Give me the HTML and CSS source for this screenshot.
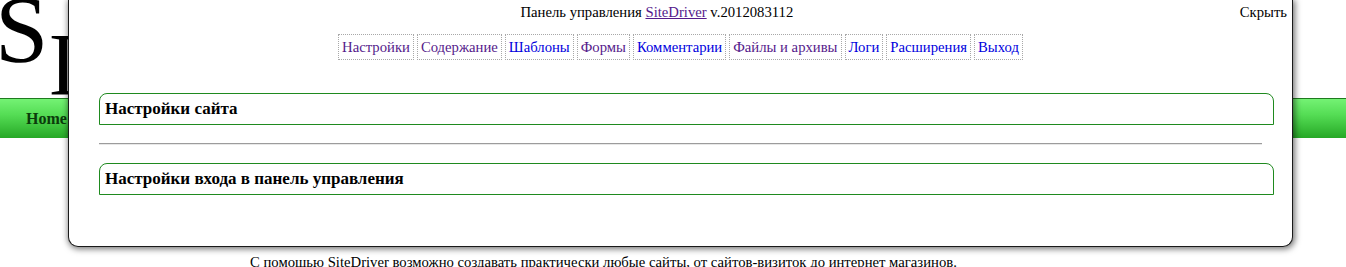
FILE: index.html
```html
<!DOCTYPE html>
<html lang="ru">

<head>
    <meta charset="UTF-8">
    <meta name="viewport" content="width=device-width, initial-scale=1.0">
    <title>SiteDriver</title>
    <link rel="stylesheet" href="styles.css">
</head>

<body>
    <div class="site-header">
        <div class="logo">
            <span class="logo-first">S</span>
            <span class="logo-rest">ITEDRIVER</span>
        </div>
    </div>

    <div class="site-nav">
        <a href="#" class="nav-link">Home</a>
    </div>

    <div class="content">
        <p>С помощью SiteDriver возможно создавать практически любые сайты, от сайтов-визиток до интернет магазинов.</p>
    </div>

    <div class="admin-panel">
        <div class="panel-header">
            <div class="panel-title">Панель управления <a href="#" class="visited">SiteDriver</a> v.2012083112</div>
            <a href="#" class="panel-hide">Скрыть</a>
        </div>

        <div class="panel-body">
            <ul class="panel-menu">
                <li><a href="#" class="visited">Настройки</a></li>
                <li><a href="#" class="visited">Содержание</a></li>
                <li><a href="#">Шаблоны</a></li>
                <li><a href="#" class="visited">Формы</a></li>
                <li><a href="#">Комментарии</a></li>
                <li><a href="#" class="visited">Файлы и архивы</a></li>
                <li><a href="#">Логи</a></li>
                <li><a href="#">Расширения</a></li>
                <li><a href="#">Выход</a></li>
            </ul>

            <div class="panel-section first">
                <h3>Настройки сайта</h3>
            </div>

            <hr>

            <div class="panel-section">
                <h3>Настройки входа в панель управления</h3>
            </div>
        </div>
    </div>
</body>

</html>
```

FILE: styles.css
```css
body {
    font-family: "Liberation Serif", "Times New Roman", serif;
    font-size: 14.7px;
    margin: 0;
    color: #000;
}

/* background site */

.site-header {
    height: 98px;
    overflow: hidden;
}

.logo {
    display: flex;
    align-items: flex-start;
    margin-left: -5px;
}

.logo-first {
    font-size: 96px;
    line-height: 1;
    margin-top: -18px;
}

.logo-rest {
    font-size: 88px;
    line-height: 1;
    margin-top: 21px;
}

.site-nav {
    height: 39px;
    border-top: 1px solid #1f7a1f;
    background: linear-gradient(#74f274, #55dd55 40%, #26a826);
    display: flex;
    align-items: center;
    padding-left: 26px;
}

.nav-link {
    color: #0b3b0b;
    font-size: 16px;
    font-weight: bold;
    text-decoration: none;
}

.content {
    padding: 116px 0 0 250px;
}

.content p {
    margin: 0;
}

/* admin panel */

.admin-panel {
    position: absolute;
    top: 0;
    left: 68px;
    width: 1225px;
    box-sizing: border-box;
    background: #fff;
    border: 1px solid #1a1a1a;
    border-top: none;
    border-radius: 0 0 10px 10px;
    box-shadow: 1px 1px 6px 1px rgba(0, 0, 0, 0.55);
}

.admin-panel a {
    color: #0000dd;
    text-decoration: none;
}

.admin-panel a.visited {
    color: #551a8b;
}

.panel-header {
    display: flex;
    padding: 3px 5px 0;
    line-height: 18px;
}

.panel-title {
    flex: 1;
    text-align: center;
}

.panel-title a {
    text-decoration: underline;
}

.admin-panel a.panel-hide {
    color: #000;
}

.panel-body {
    padding: 0 30px 51px;
}

.panel-menu {
    list-style-type: none;
    margin: 13px 0 0;
    padding: 0;
    display: flex;
    justify-content: center;
    gap: 3px;
    line-height: 18px;
}

.panel-menu li {
    border: 1px dotted #a8a8a8;
    padding: 3px 3px;
}

.panel-section {
    width: 100%;
    padding: 6px 5px;
    border: 1px solid #1f8a1f;
    border-radius: 8px 8px 0 0;
}

.panel-section.first {
    margin-top: 33px;
}

.panel-section h3 {
    margin: 0;
    font-size: 17px;
    line-height: 18px;
}

hr {
    margin: 18px 0 18px;
    border: none;
    border-top: 1px solid #9c9c9c;
    border-bottom: 1px solid #e8e8e8;
    height: 0;
}
```
